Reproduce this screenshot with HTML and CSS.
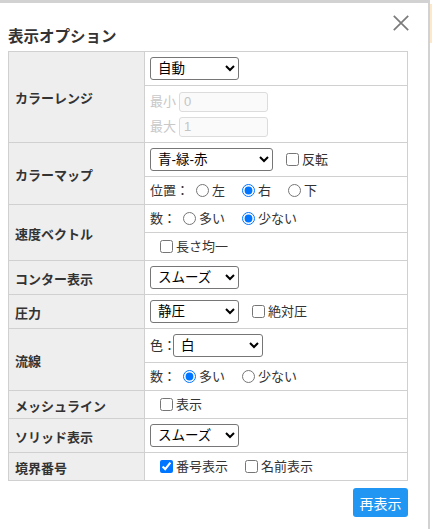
FILE: index.html
```html
<!DOCTYPE html>
<html lang="ja">
<head>
<meta charset="utf-8">
<title>表示オプション</title>
<link rel="stylesheet" href="styles.css">
</head>
<body>
<div class="frame">
  <div class="dialog">
    <h2 class="title">表示オプション</h2>
    <button class="close" aria-label="閉じる">
      <svg width="16" height="16" viewBox="0 0 16 16"><path d="M0.8 0.8 L15.2 15.2 M15.2 0.8 L0.8 15.2" stroke="#7b7b7b" stroke-width="1.7" fill="none"/></svg>
    </button>
    <div class="grid">
      <div class="lab span2">カラーレンジ</div>
      <div class="val"><select class="sel"><option>自動</option></select></div>
      <div class="val col">
        <div class="mm"><span class="dis">最小</span><input class="num" value="0" disabled></div>
        <div class="mm"><span class="dis">最大</span><input class="num" value="1" disabled></div>
      </div>

      <div class="lab span2">カラーマップ</div>
      <div class="val"><select class="sel wide"><option>青-緑-赤</option></select><label class="cb after"><input type="checkbox">反転</label></div>
      <div class="val"><span>位置：</span><label class="rd"><input type="radio" name="pos">左</label><label class="rd"><input type="radio" name="pos" checked>右</label><label class="rd"><input type="radio" name="pos">下</label></div>

      <div class="lab span2">速度ベクトル</div>
      <div class="val"><span>数：</span><label class="rd"><input type="radio" name="vn">多い</label><label class="rd"><input type="radio" name="vn" checked>少ない</label></div>
      <div class="val"><label class="cb"><input type="checkbox">長さ均一</label></div>

      <div class="lab">コンター表示</div>
      <div class="val"><select class="sel"><option>スムーズ</option></select></div>

      <div class="lab">圧力</div>
      <div class="val"><select class="sel"><option>静圧</option></select><label class="cb after"><input type="checkbox">絶対圧</label></div>

      <div class="lab span2">流線</div>
      <div class="val"><span>色：</span><select class="sel color"><option>白</option></select></div>
      <div class="val"><span>数：</span><label class="rd"><input type="radio" name="sn" checked>多い</label><label class="rd"><input type="radio" name="sn">少ない</label></div>

      <div class="lab">メッシュライン</div>
      <div class="val"><label class="cb"><input type="checkbox">表示</label></div>

      <div class="lab">ソリッド表示</div>
      <div class="val"><select class="sel"><option>スムーズ</option></select></div>

      <div class="lab">境界番号</div>
      <div class="val"><label class="cb"><input type="checkbox" checked>番号表示</label><label class="cb"><input type="checkbox">名前表示</label></div>
    </div>
    <div class="footer"><button class="btn">再表示</button></div>
  </div>
</div>
<div class="edge"></div>
</body>
</html>
```
FILE: styles.css
```css
* { box-sizing: border-box; }

body {
  margin: 0;
  display: flex;
  align-items: flex-start;
  background: #fff;
  color: #333;
  font-family: "Liberation Sans", "Noto Sans CJK JP", sans-serif;
}

.frame {
  position: relative;
  width: 430px;
  height: 529px;
  border-top: 3px solid #d2d2d2;
  border-right: 2px solid #d2d2d2;
}

.edge {
  width: 2px;
  height: 39px;
  margin-top: 4px;
  background: #fde8c9;
}

.dialog {
  padding: 24px 21px 0 8px;
}

.title {
  margin: 0 0 4px;
  font-size: 15.5px;
  line-height: 20px;
  font-weight: bold;
  color: #333;
}

.close {
  position: absolute;
  left: 393px;
  top: 12px;
  width: 16px;
  height: 16px;
  padding: 0;
  border: 0;
  background: none;
  display: block;
}
.close svg { display: block; }

.grid {
  display: grid;
  width: 400px;
  grid-template-columns: 135px 262px;
  grid-template-rows: 33px 56px 33px 27px 27px 27px 33px 33px 33px 27px 27px 33px 27px;
  gap: 1px;
  padding: 1px;
  background: #d0d0d0;
}

.lab {
  grid-column: 1;
  background: #eeeeee;
  display: flex;
  align-items: center;
  padding: 1px 0 0 6px;
  font-size: 13px;
  font-weight: bold;
  color: #333;
}
.span2 { grid-row: span 2; }

.val {
  grid-column: 2;
  background: #fff;
  display: flex;
  align-items: center;
  padding-left: 5px;
  font-size: 13px;
  line-height: 17px;
  color: #333;
}
.val.col {
  flex-direction: column;
  align-items: flex-start;
  justify-content: center;
  gap: 5px;
}

.mm { display: flex; align-items: center; }
.dis { color: #c8c8c8; }
.num {
  width: 89px;
  height: 20px;
  margin: 0 0 0 3px;
  padding: 0 4px;
  border: 1px solid #dcdcdc;
  border-radius: 3px;
  background: #fafafa;
  color: #c4c4c4;
  font-size: 13px;
  font-family: inherit;
}

.sel {
  width: 89px;
  height: 23px;
  margin: 0;
  padding: 0 3px;
  border: 1px solid #767676;
  border-radius: 3px;
  background: #fff;
  color: #000;
  font-size: 13.5px;
  font-family: inherit;
}
.sel.wide { width: 123px; }
.sel.color { width: 90px; margin-left: -3px; }

.rd, .cb {
  display: inline-flex;
  align-items: center;
}
.rd input, .cb input {
  width: 13px;
  height: 13px;
  margin: 0 3px 0 0;
}
.rd { margin-left: 7px; }
.rd + .rd { margin-left: 17px; }

.cb { margin-left: 10px; }
.cb + .cb { margin-left: 17px; }
.cb.after { margin-left: 13px; }

.footer {
  width: 400px;
  display: flex;
  justify-content: flex-end;
  margin-top: 7px;
}
.btn {
  width: 55px;
  height: 29px;
  padding: 0;
  border: 0;
  border-radius: 3px;
  background: #2196f3;
  color: #fff;
  font-size: 14px;
  font-family: inherit;
}
```
